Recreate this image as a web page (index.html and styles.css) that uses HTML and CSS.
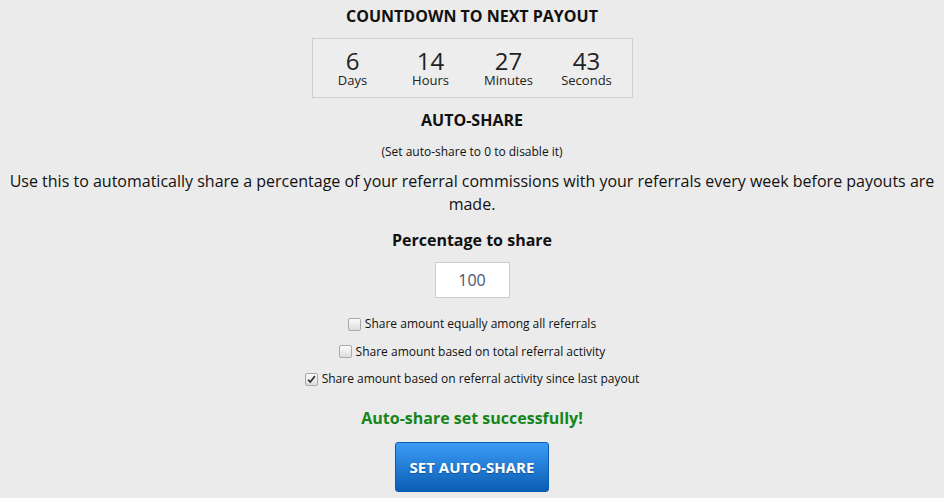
FILE: index.html
```html
<!DOCTYPE html>
<html>
<head>
<meta charset="utf-8">
<link rel="stylesheet" href="styles.css">
</head>
<body>
<div class="page">
  <h2 class="title">COUNTDOWN TO NEXT PAYOUT</h2>
  <div class="countdown">
    <div class="unit"><div class="num">6</div><div class="lbl">Days</div></div>
    <div class="unit"><div class="num">14</div><div class="lbl">Hours</div></div>
    <div class="unit"><div class="num">27</div><div class="lbl">Minutes</div></div>
    <div class="unit"><div class="num">43</div><div class="lbl">Seconds</div></div>
  </div>
  <h2 class="heading">AUTO-SHARE</h2>
  <p class="hint">(Set auto-share to 0 to disable it)</p>
  <p class="desc">Use this to automatically share a percentage of your referral commissions with your referrals every week before payouts are made.</p>
  <h3 class="label">Percentage to share</h3>
  <div class="input-wrap"><input class="pct" type="text" value="100"></div>
  <div class="options">
    <label class="opt"><input class="chk" type="checkbox"> Share amount equally among all referrals</label>
    <label class="opt"><input class="chk" type="checkbox"> Share amount based on total referral activity</label>
    <label class="opt"><input class="chk" type="checkbox" checked> Share amount based on referral activity since last payout</label>
  </div>
  <div class="success">Auto-share set successfully!</div>
  <button class="btn">SET AUTO-SHARE</button>
</div>
</body>
</html>
```
FILE: styles.css
```css
html, body {
  margin: 0;
  padding: 0;
  background: #ebebeb;
}
body {
  font-family: "Open Sans", "Liberation Sans", sans-serif;
  color: #111;
}
.page {
  display: flex;
  flex-direction: column;
  align-items: center;
  text-align: center;
  padding-top: 5px;
}
.title {
  margin: 0;
  font-size: 16px;
  line-height: 22px;
  font-weight: 700;
}
.countdown {
  margin-top: 11px;
  display: flex;
  border: 1px solid #cfcfcf;
  background: #ededed;
  padding: 9px 6px 10px 1px;
}
.unit {
  width: 78px;
  display: flex;
  flex-direction: column;
  align-items: center;
}
.num {
  font-size: 24px;
  line-height: 26px;
  color: #222;
}
.lbl {
  font-size: 13px;
  line-height: 13px;
  color: #222;
}
.heading {
  margin: 11px 0 0;
  font-size: 16px;
  line-height: 22px;
  font-weight: 700;
}
.hint {
  margin: 13px 0 0;
  font-size: 12px;
  line-height: 15px;
}
.desc {
  margin: 11px 0 0;
  font-size: 16px;
  line-height: 23px;
  padding: 0 4px;
}
.label {
  margin: 13px 0 0;
  font-size: 16px;
  line-height: 22px;
  font-weight: 700;
}
.input-wrap {
  margin-top: 11px;
}
.pct {
  box-sizing: border-box;
  width: 75px;
  height: 36px;
  border: 1px solid #ccc;
  background: #fff;
  text-align: center;
  font-family: "Open Sans", sans-serif;
  font-size: 16px;
  color: #4a5470;
  padding: 0;
  outline: none;
}
.options {
  margin-top: 16px;
  display: flex;
  flex-direction: column;
  align-items: center;
  gap: 7.5px;
}
.opt {
  font-size: 12px;
  line-height: 20px;
  color: #111;
  display: flex;
  align-items: center;
}
.chk {
  -webkit-appearance: none;
  appearance: none;
  box-sizing: border-box;
  margin: 0 4px 0 0;
  width: 13px;
  height: 13px;
  border: 1px solid #a9a9a9;
  border-radius: 2px;
  background: linear-gradient(#fcfcfc, #dcdcdc);
}
.chk:checked {
  background-image: url("data:image/svg+xml,%3Csvg xmlns='http://www.w3.org/2000/svg' viewBox='0 0 13 13'%3E%3Cpath d='M2.5 6.8 L5 9.5 L10.5 2.5' fill='none' stroke='%23333' stroke-width='2'/%3E%3C/svg%3E"), linear-gradient(#fcfcfc, #dcdcdc);
}
.success {
  margin-top: 18px;
  font-size: 16px;
  line-height: 22px;
  font-weight: 700;
  color: #16851a;
}
.btn {
  margin-top: 13px;
  width: 154px;
  height: 50px;
  border: 1px solid #0a5cb0;
  border-radius: 3px;
  background: linear-gradient(#3c9cf7, #0a5db3);
  color: #fff;
  font-family: "Open Sans", sans-serif;
  font-size: 15px;
  font-weight: 700;
  text-shadow: 0 1px 1px rgba(0,0,0,0.3);
  cursor: pointer;
}
```
